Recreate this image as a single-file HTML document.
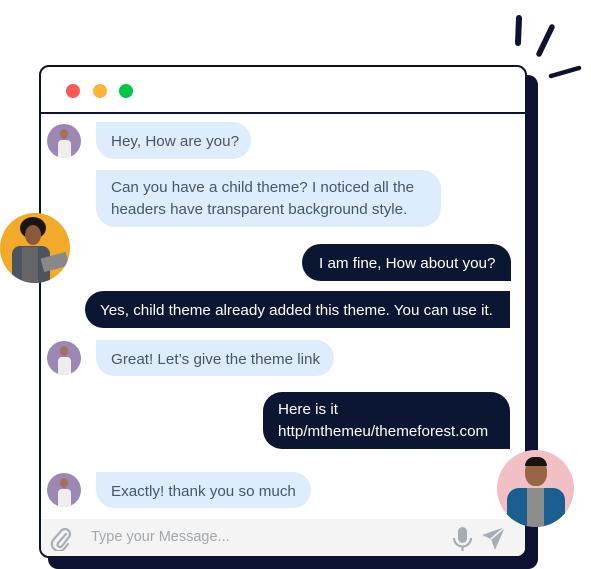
<!DOCTYPE html>
<html><head><style>
*{margin:0;padding:0;box-sizing:border-box}
body{width:591px;height:569px;background:#fff;position:relative;overflow:hidden;font-family:"Liberation Sans",sans-serif}
.a{position:absolute}
.shadow{left:48px;top:75px;width:490px;height:494px;background:#0b1330;border-radius:10px}
.win{left:39px;top:65px;width:488px;height:493px;background:#fff;border:2px solid #0b1330;border-radius:10px;overflow:hidden}
.hdr{left:0;top:0;width:100%;height:47px;border-bottom:2px solid #0b1330}
.dot{width:14px;height:14px;border-radius:50%;top:17px}
.b{position:absolute;font-size:15.2px;line-height:22px;padding:9px 15px 6px;white-space:nowrap}
.l{background:#ddedfd;color:#4b5468;border-radius:0 19px 19px 19px}
.d{background:#0b1632;color:#fff;border-radius:19px 19px 0 19px}
.av{position:absolute;border-radius:50%;overflow:hidden}
.inp{left:0;top:452px;width:100%;height:39px;background:#f4f4f4}
</style></head><body>
<svg class="a" style="left:505px;top:10px" width="86" height="75" viewBox="0 0 86 75">
<path d="M14 8 L13 33" stroke="#0b1330" stroke-width="6" stroke-linecap="round"/>
<path d="M47 17 L34 44" stroke="#0b1330" stroke-width="5.5" stroke-linecap="round"/>
<path d="M74 58 L46 66" stroke="#0b1330" stroke-width="4.5" stroke-linecap="round"/>
</svg>
<div class="a shadow"></div>
<div class="a win">
 <div class="a hdr">
  <div class="a dot" style="left:25px;background:#fd5a57"></div>
  <div class="a dot" style="left:52px;background:#feb33b"></div>
  <div class="a dot" style="left:78px;background:#00c645"></div>
 </div>
 <div class="a inp">
  <svg class="a" style="left:9px;top:8px" width="22" height="24" viewBox="0 0 22 24"><path d="M16 7 L8 16 a2.5 2.5 0 0 0 4 3 L19 10 a5 5 0 0 0 -7 -7 L4 12 a7 7 0 0 0 10 10 L18 17" fill="none" stroke="#a8adb4" stroke-width="2.2" stroke-linecap="round"/></svg>
  <div class="a" style="left:50px;top:10px;font-size:14.5px;color:#a3a8ae">Type your Message...</div>
  <svg class="a" style="left:411px;top:7px" width="22" height="26" viewBox="0 0 22 26"><rect x="6" y="1" width="9" height="16" rx="4.5" fill="#a8adb4"/><path d="M2 12 a8.5 8.5 0 0 0 17 0 M10.5 21 V25" fill="none" stroke="#a8adb4" stroke-width="2.2"/></svg>
  <svg class="a" style="left:440px;top:7px" width="26" height="26" viewBox="0 0 26 26"><path d="M24 1 L1 9 L10 13 L14 24 Z" fill="#a8adb4"/><path d="M24 1 L10 13" stroke="#f4f4f4" stroke-width="1.5"/></svg>
 </div>
</div>

<div class="b l" style="left:96px;top:122px;height:37px;width:155px">Hey, How are you?</div>
<div class="b l" style="left:96px;top:170px;height:57px;width:345px;padding-top:7px">Can you have a child theme? I noticed all the<br>headers have transparent background style.</div>
<div class="b d" style="left:302px;top:244px;height:37px;width:209px;padding-left:17px">I am fine, How about you?</div>
<div class="b d" style="left:85px;top:291px;height:37px;width:425px;border-radius:19px 0 0 19px">Yes, child theme already added this theme. You can use it.</div>
<div class="b l" style="left:96px;top:340px;height:36px;width:238px">Great! Let’s give the theme link</div>
<div class="b d" style="left:263px;top:392px;height:57px;width:247px;padding-top:7px">Here is it<br>http/mthemeu/themeforest.com</div>
<div class="b l" style="left:96px;top:472px;height:36px;width:215px">Exactly! thank you so much</div>

<div class="av" style="left:47px;top:124px;width:34px;height:34px;background:#9b88b5"><div class="a" style="left:11px;top:16px;width:13px;height:18px;background:#eee;border-radius:4px 4px 0 0"></div><div class="a" style="left:13px;top:5px;width:8px;height:10px;background:#a7705a;border-radius:50%"></div></div>
<div class="av" style="left:47px;top:341px;width:34px;height:34px;background:#9b88b5"><div class="a" style="left:11px;top:16px;width:13px;height:18px;background:#eee;border-radius:4px 4px 0 0"></div><div class="a" style="left:13px;top:5px;width:8px;height:10px;background:#a7705a;border-radius:50%"></div></div>
<div class="av" style="left:47px;top:473px;width:34px;height:34px;background:#9b88b5"><div class="a" style="left:11px;top:16px;width:13px;height:18px;background:#eee;border-radius:4px 4px 0 0"></div><div class="a" style="left:13px;top:5px;width:8px;height:10px;background:#a7705a;border-radius:50%"></div></div>

<div class="av" style="left:0;top:213px;width:70px;height:70px;background:#f2aa2a">
 <div class="a" style="left:20px;top:4px;width:26px;height:22px;background:#1b1410;border-radius:50%"></div>
 <div class="a" style="left:25px;top:12px;width:16px;height:20px;background:#8a5a3c;border-radius:50%"></div>
 <div class="a" style="left:12px;top:33px;width:38px;height:40px;background:#4a5560;border-radius:8px 8px 0 0"></div>
 <div class="a" style="left:22px;top:34px;width:16px;height:36px;background:#666"></div>
 <div class="a" style="left:42px;top:42px;width:26px;height:14px;background:#888;transform:rotate(-15deg)"></div>
</div>
<div class="av" style="left:497px;top:450px;width:77px;height:77px;background:#f1bfc4">
 <div class="a" style="left:28px;top:9px;width:22px;height:27px;background:#9a6547;border-radius:45%"></div>
 <div class="a" style="left:28px;top:7px;width:22px;height:9px;background:#1a1410;border-radius:10px 10px 0 0"></div>
 <div class="a" style="left:10px;top:38px;width:58px;height:45px;background:#1b5e92;border-radius:12px 12px 0 0"></div>
 <div class="a" style="left:30px;top:38px;width:17px;height:45px;background:#8c8c8a"></div>
</div>
</body></html>
